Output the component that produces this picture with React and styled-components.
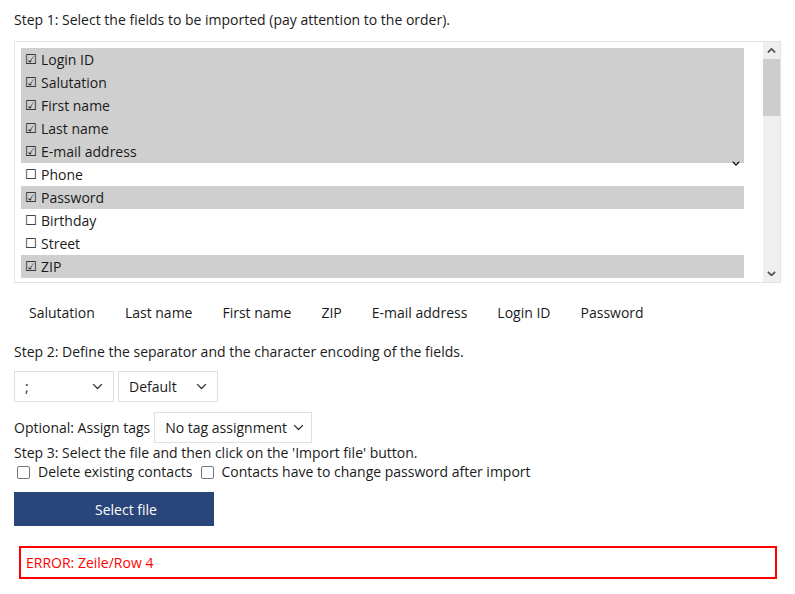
import React, { useState } from "react";
import styled, { createGlobalStyle } from "styled-components";

const GlobalStyle = createGlobalStyle`
  body {
    margin: 0;
    background: #fff;
    font-family: "Open Sans", "Liberation Sans", sans-serif;
    font-size: 14px;
    color: #1a1a1a;
  }
`;

const Page = styled.div`
  padding: 10px 14px 0 14px;
  width: 767px;
`;

const StepText = styled.div`
  line-height: 20px;
  margin: ${(p) => p.$margin || "0"};
`;

const ListBox = styled.div`
  position: relative;
  display: flex;
  height: 240px;
  border: 1px solid #e3e3e3;
  margin-top: 11px;
`;

const List = styled.ul`
  flex: 1;
  list-style: none;
  margin: 0;
  padding: 6px 19px 0 6px;
  overflow: hidden;
`;

const Row = styled.li`
  display: flex;
  align-items: center;
  height: 23px;
  padding-left: 4px;
  background: ${(p) => (p.$checked ? "#cfcfcf" : "transparent")};
  cursor: default;
`;

const Mark = styled.span`
  width: 15px;
  font-family: "DejaVu Sans", sans-serif;
  font-size: 13px;
  font-weight: bold;
  color: #111;
  margin-right: 1px;
`;

const Scrollbar = styled.div`
  width: 17px;
  display: flex;
  flex-direction: column;
  background: #efefef;
`;

const ScrollButton = styled.div`
  height: 17px;
  display: flex;
  align-items: center;
  justify-content: center;
  color: #555;
`;

const Track = styled.div`
  flex: 1;
`;

const Thumb = styled.div`
  height: 57px;
  background: #cdcdcd;
`;

const StrayChevron = styled.div`
  position: absolute;
  left: 717px;
  top: 119px;
  line-height: 0;
`;

const OrderRow = styled.div`
  display: flex;
  margin-top: 19px;
  line-height: 22px;
`;

const OrderItem = styled.span`
  padding: 0 15px;
`;

const SelectRow = styled.div`
  display: flex;
  align-items: center;
  gap: 4px;
  margin-top: ${(p) => p.$mt || "0"};
`;

const FakeSelect = styled.div`
  display: flex;
  align-items: center;
  justify-content: space-between;
  box-sizing: border-box;
  width: ${(p) => p.$w}px;
  height: 31px;
  padding: 0 ${(p) => p.$pr || 10}px 0 ${(p) => p.$pl || 10}px;
  border: 1px solid #e0e0e0;
  white-space: nowrap;
  color: #1a1a1a;
`;

const CheckRow = styled.div`
  display: flex;
  align-items: center;
  margin-top: -1px;
  line-height: 20px;
`;

const CheckLabel = styled.label`
  display: flex;
  align-items: center;
  gap: 8px;
  margin-right: 5px;
`;

const Box = styled.span`
  display: inline-block;
  box-sizing: border-box;
  width: 13px;
  height: 13px;
  margin-left: 3px;
  border: 1.5px solid #777;
  border-radius: 2px;
  background: ${(p) => (p.$on ? "#29457a" : "#fff")};
`;

const PrimaryButton = styled.button`
  display: block;
  width: 200px;
  height: 34px;
  margin-top: 10px;
  padding: 0 0 0 24px;
  border: none;
  background: #29457a;
  color: #fff;
  font-family: inherit;
  font-size: 14px;
  cursor: pointer;
`;

const ErrorBox = styled.div`
  box-sizing: border-box;
  width: 758px;
  height: 33px;
  margin: 20px 0 0 5px;
  padding: 0 5px;
  display: flex;
  align-items: center;
  border: 2px solid #ff0000;
  color: #ff0000;
`;

const Chevron = ({ size = 12, dir = "down", stroke = "#333", width = 1.2 }) => (
  <svg width={size} height={size * 0.6} viewBox="0 0 10 6" fill="none">
    <path
      d={dir === "down" ? "M1 1 L5 5 L9 1" : "M1 5 L5 1 L9 5"}
      stroke={stroke}
      strokeWidth={width}
    />
  </svg>
);

const fields = [
  { name: "Login ID", checked: true },
  { name: "Salutation", checked: true },
  { name: "First name", checked: true },
  { name: "Last name", checked: true },
  { name: "E-mail address", checked: true },
  { name: "Phone", checked: false },
  { name: "Password", checked: true },
  { name: "Birthday", checked: false },
  { name: "Street", checked: false },
  { name: "ZIP", checked: true },
];

const order = ["Salutation", "Last name", "First name", "ZIP", "E-mail address", "Login ID", "Password"];

const App = () => {
  const [deleteExisting, setDeleteExisting] = useState(false);
  const [changePw, setChangePw] = useState(false);

  return (
    <Page>
      <GlobalStyle />
      <StepText>Step 1: Select the fields to be imported (pay attention to the order).</StepText>
      <ListBox>
        <List>
          {fields.map((f) => (
            <Row key={f.name} $checked={f.checked}>
              <Mark>{f.checked ? "☑" : "☐"}</Mark>
              {f.name}
            </Row>
          ))}
        </List>
        <StrayChevron>
          <Chevron size={8} stroke="#111" width={1.6} />
        </StrayChevron>
        <Scrollbar>
          <ScrollButton>
            <Chevron size={9} dir="up" stroke="#555" width={2} />
          </ScrollButton>
          <Track>
            <Thumb />
          </Track>
          <ScrollButton>
            <Chevron size={9} stroke="#555" width={2} />
          </ScrollButton>
        </Scrollbar>
      </ListBox>

      <OrderRow>
        {order.map((o) => (
          <OrderItem key={o}>{o}</OrderItem>
        ))}
      </OrderRow>

      <StepText $margin="18px 0 0 0">Step 2: Define the separator and the character encoding of the fields.</StepText>
      <SelectRow $mt="9px">
        <FakeSelect $w={100}>
          <span>;</span>
          <Chevron size={11} />
        </FakeSelect>
        <FakeSelect $w={100}>
          <span>Default</span>
          <Chevron size={11} />
        </FakeSelect>
      </SelectRow>

      <SelectRow $mt="10px">
        <span>Optional: Assign tags</span>
        <FakeSelect $w={158} $pl={10} $pr={7}>
          <span>No tag assignment</span>
          <Chevron size={11} />
        </FakeSelect>
      </SelectRow>

      <StepText>Step 3: Select the file and then click on the 'Import file' button.</StepText>
      <CheckRow>
        <CheckLabel onClick={() => setDeleteExisting(!deleteExisting)}>
          <Box $on={deleteExisting} />
          Delete existing contacts
        </CheckLabel>
        <CheckLabel onClick={() => setChangePw(!changePw)}>
          <Box $on={changePw} />
          Contacts have to change password after import
        </CheckLabel>
      </CheckRow>

      <PrimaryButton>Select file</PrimaryButton>

      <ErrorBox>ERROR: Zeile/Row 4</ErrorBox>
    </Page>
  );
};

export default App;
